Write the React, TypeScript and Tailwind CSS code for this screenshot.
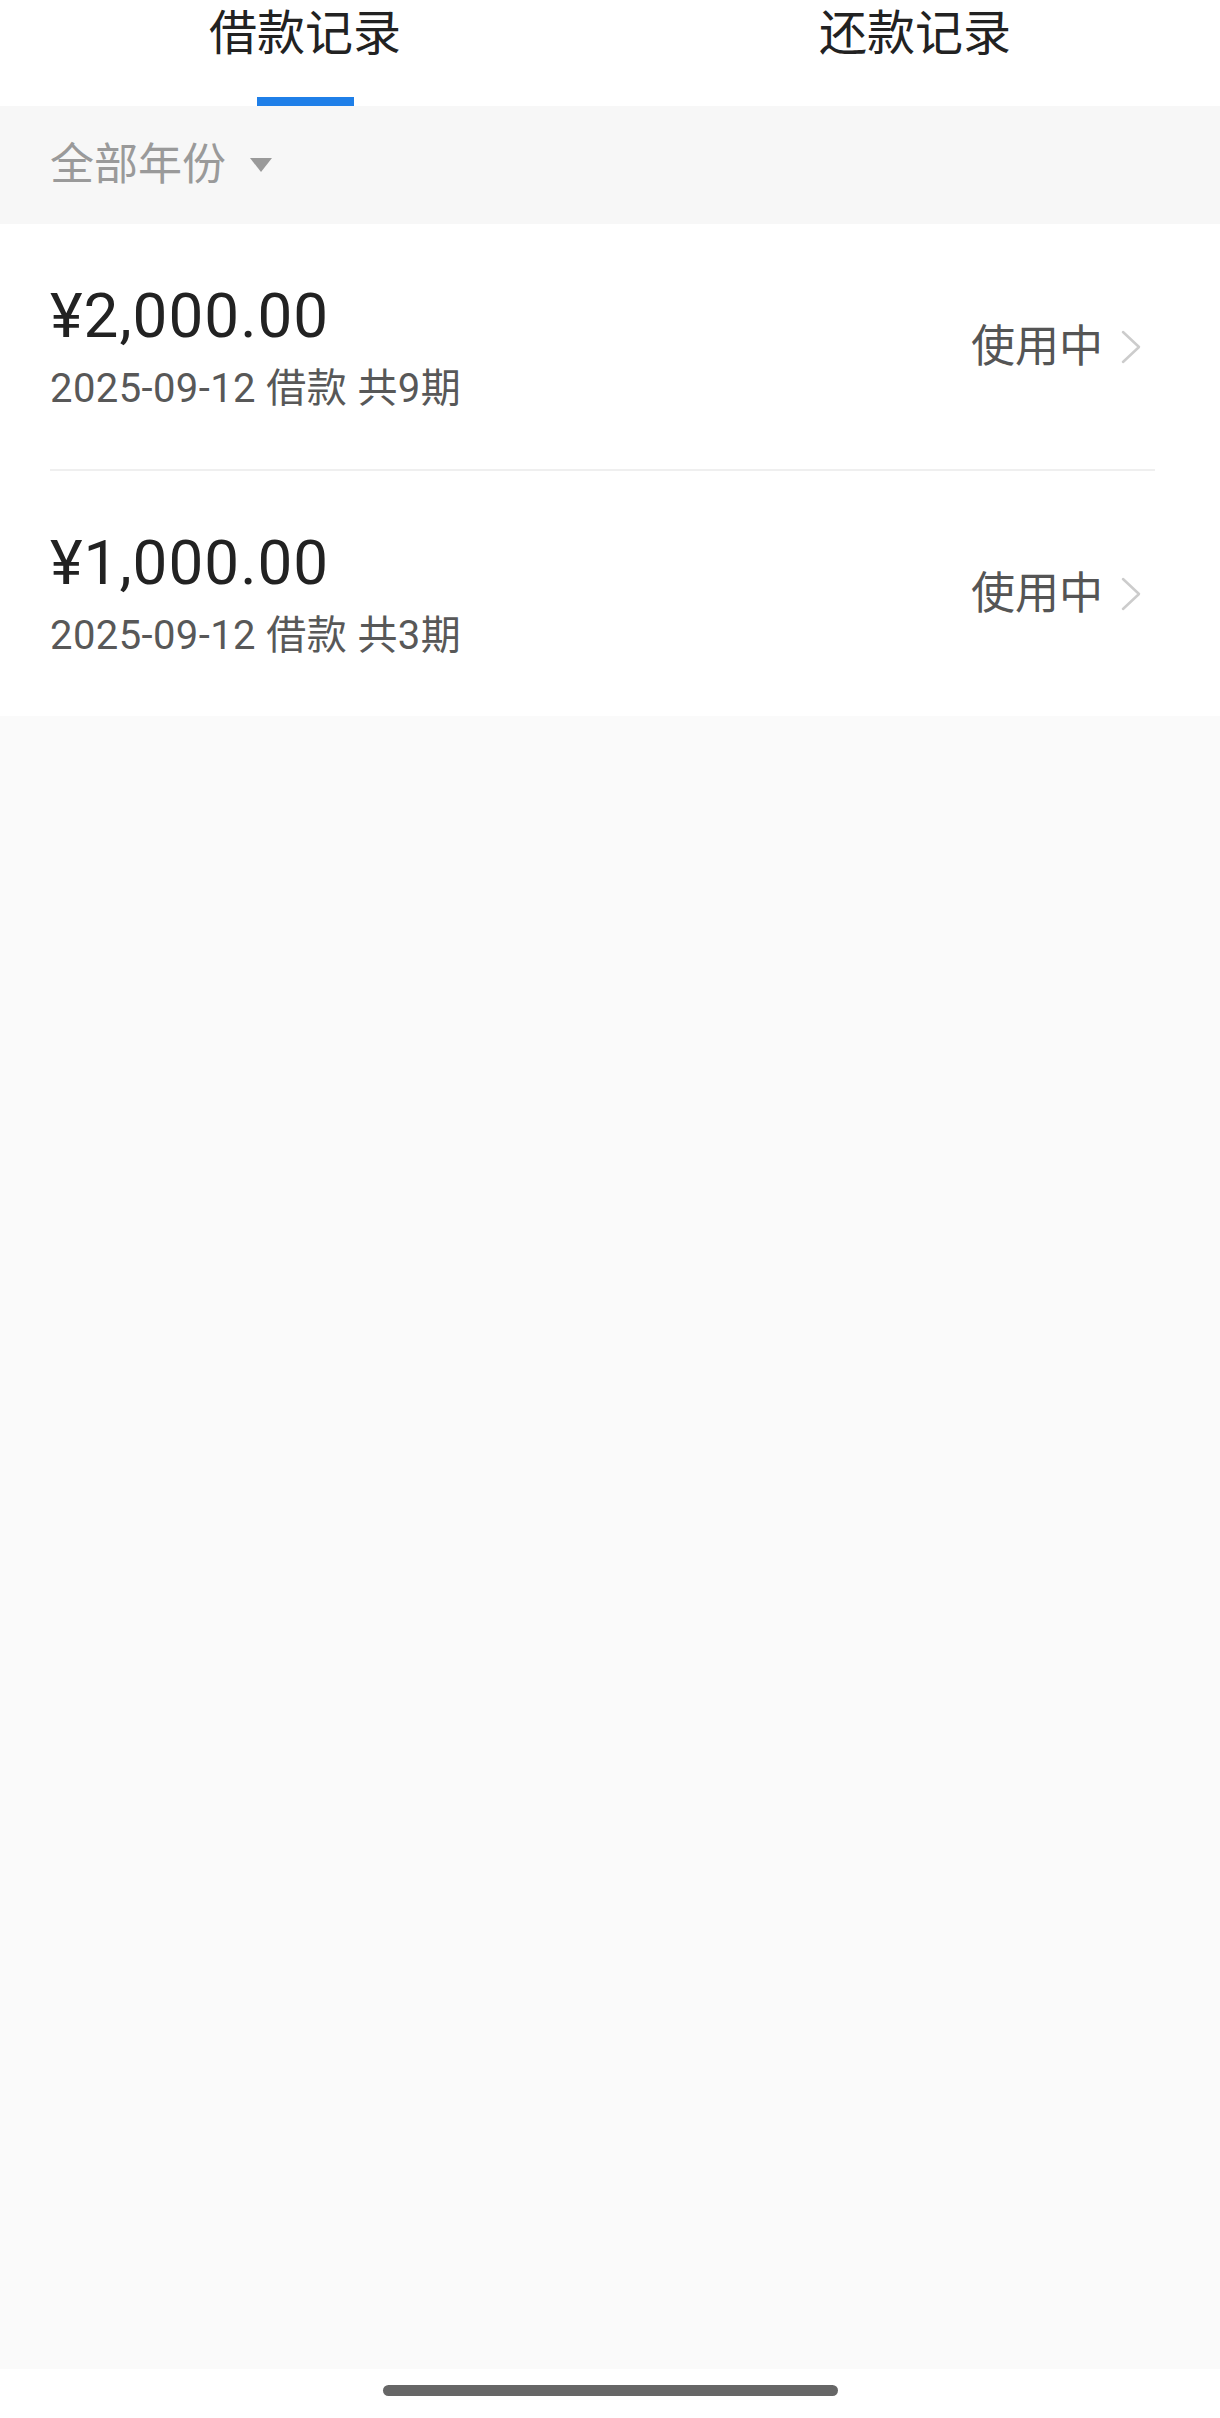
import React from "react";

const font = { fontFamily: 'Roboto, "Noto Sans CJK SC", sans-serif' };

const records = [
  { amount: "¥2,000.00", date: "2025-09-12", periods: 9, status: "使用中" },
  { amount: "¥1,000.00", date: "2025-09-12", periods: 3, status: "使用中" },
];

function Chevron() {
  return (
    <svg width="26" height="34" viewBox="0 0 26 34" className="ml-[15px] mr-[11px]">
      <path d="M5 2 L21 17 L5 32" fill="none" stroke="#cccccc" strokeWidth="2.5" strokeLinecap="round" strokeLinejoin="round" />
    </svg>
  );
}

export default function App() {
  return (
    <div className="min-h-screen flex flex-col bg-[#fafafa]" style={font}>
      {/* tabs */}
      <div className="h-[106px] bg-white flex">
        <div className="flex-1 flex flex-col items-center justify-between pt-[10px]">
          <span className="text-[48px] leading-none text-[#222]">借款记录</span>
          <div className="w-[97px] h-[9px] bg-[#1f7fe8]" />
        </div>
        <div className="flex-1 flex flex-col items-center pt-[10px]">
          <span className="text-[48px] leading-none text-[#222]">还款记录</span>
        </div>
      </div>

      {/* year filter */}
      <div className="h-[118px] bg-[#f7f7f7] flex items-center px-[50px]">
        <span className="text-[44px] leading-none text-[#9a9a9a]">全部年份</span>
        <svg width="24" height="16" viewBox="0 0 24 16" className="ml-[23px]">
          <path d="M1 1 H23 L12 15 Z" fill="#9a9a9a" />
        </svg>
      </div>

      {/* list */}
      <div className="bg-white pl-[50px] pr-[65px]">
        {records.map((r, i) => (
          <div key={i}>
            {i > 0 && <div className="h-[2px] bg-[#efefef]" />}
            <div className="h-[245px] flex items-center justify-between">
              <div className="flex flex-col">
                <span className="text-[62px] leading-none tracking-[1px] text-[#222]">{r.amount}</span>
                <span className="mt-[22px] text-[40px] leading-none tracking-[0.4px] text-[#585858]">
                  {r.date} 借款 共{r.periods}期
                </span>
              </div>
              <div className="flex items-center">
                <span className="text-[44px] leading-none text-[#555]">{r.status}</span>
                <Chevron />
              </div>
            </div>
          </div>
        ))}
      </div>

      <div className="flex-1 bg-[#fafafa]" />

      {/* home indicator */}
      <div className="h-[49px] bg-white flex justify-center pt-[16px]">
        <div className="w-[455px] h-[11px] rounded-full bg-[#666]" />
      </div>
    </div>
  );
}
